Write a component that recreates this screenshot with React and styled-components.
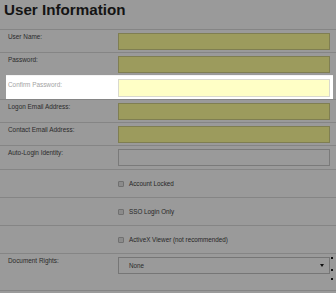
import React from "react";
import styled, { createGlobalStyle } from "styled-components";

const Global = createGlobalStyle`
  html, body { margin: 0; padding: 0; background: #9a9a9a; }
  body { font-family: "Liberation Sans", Arial, sans-serif; }
`;

const Page = styled.div`
  width: 336px;
  height: 293px;
  background: #9a9a9a;
  overflow: hidden;
`;

const TitleBar = styled.div`
  height: 29px;
  padding-left: 4px;
  box-sizing: border-box;
`;

const Title = styled.h1`
  margin: 0;
  font-size: 15.2px;
  line-height: 20px;
  font-weight: bold;
  color: #141414;
`;

const Form = styled.div`
  display: flex;
  flex-direction: column;
  border-bottom: 1px solid #858585;
`;

const Row = styled.div`
  display: grid;
  grid-template-columns: 110px 212px auto;
  align-items: ${(p) => (p.$center ? "center" : "start")};
  height: ${(p) => p.$h}px;
  box-sizing: border-box;
  border-top: 1px solid #858585;
  padding: ${(p) => (p.$center ? "0" : "3px")} 0 0 8px;
  background: ${(p) => (p.$highlight ? "#ffffff" : "transparent")};
  ${(p) =>
    p.$highlight &&
    `
    margin: 0 3px 0 6px;
    padding-left: 2px;
    border-top-color: #f4f4f4;
  `}
`;

const Label = styled.label`
  font-size: 6.4px;
  line-height: ${(p) => (p.$muted ? 12 : 8)}px;
  color: ${(p) => (p.$muted ? "#a3a3a3" : "#2b2b2b")};
  white-space: nowrap;
`;

const Input = styled.div`
  box-sizing: border-box;
  width: 212px;
  height: ${(p) => (p.$variant === "focus" ? 18 : 17)}px;
  background: ${(p) =>
    p.$variant === "focus"
      ? "#ffffc6"
      : p.$variant === "plain"
      ? "#9a9a9a"
      : "#9c9b5d"};
  border: 1px solid
    ${(p) =>
      p.$variant === "focus"
        ? "#d9d9cf"
        : p.$variant === "plain"
        ? "#7a7a7a"
        : "#7f7e52"};
`;

const CheckCell = styled.div`
  grid-column: 2;
  display: flex;
  align-items: center;
  gap: 5px;
  font-size: 6.3px;
  color: #262626;
  white-space: nowrap;
`;

const Box = styled.span`
  display: inline-block;
  width: 6px;
  height: 6px;
  box-sizing: border-box;
  background: #8b8b8b;
  border: 1px solid #707070;
  border-radius: 1px;
`;

const Select = styled.div`
  box-sizing: border-box;
  width: 212px;
  height: 17px;
  border: 1px solid #767676;
  display: flex;
  align-items: center;
  justify-content: space-between;
  padding: 0 5px 0 10px;
  font-size: 6.3px;
  color: #2a2a2a;
`;

const Dots = styled.div`
  display: flex;
  flex-direction: column;
  padding-left: 1px;
`;

const Dot = styled.span`
  width: 2px;
  height: 2px;
  background: #111;
  margin-bottom: ${(p) => p.$gap}px;
`;

const textRows = [
  { label: "User Name:", h: 23 },
  { label: "Password:", h: 23 },
  { label: "Confirm Password:", h: 24, focus: true },
  { label: "Logon Email Address:", h: 23 },
  { label: "Contact Email Address:", h: 23 },
  { label: "Auto-Login Identity:", h: 24, plain: true },
];

const checks = ["Account Locked", "SSO Login Only", "ActiveX Viewer (not recommended)"];

export default function App() {
  return (
    <Page>
      <Global />
      <TitleBar>
        <Title>User Information</Title>
      </TitleBar>
      <Form>
        {textRows.map((r) => (
          <Row key={r.label} $h={r.h} $highlight={r.focus}>
            <Label $muted={r.focus}>{r.label}</Label>
            <Input $variant={r.focus ? "focus" : r.plain ? "plain" : "filled"} />
          </Row>
        ))}
        {checks.map((c) => (
          <Row key={c} $h={28} $center>
            <CheckCell>
              <Box />
              <span>{c}</span>
            </CheckCell>
          </Row>
        ))}
        <Row $h={37}>
          <Label>Document Rights:</Label>
          <Select>
            <span>None</span>
            <svg width="4" height="3" viewBox="0 0 4 3">
              <path d="M0 0H4L2 3Z" fill="#111" />
            </svg>
          </Select>
          <Dots>
            <Dot $gap={10} />
            <Dot $gap={7} />
            <Dot $gap={0} />
          </Dots>
        </Row>
      </Form>
    </Page>
  );
}
